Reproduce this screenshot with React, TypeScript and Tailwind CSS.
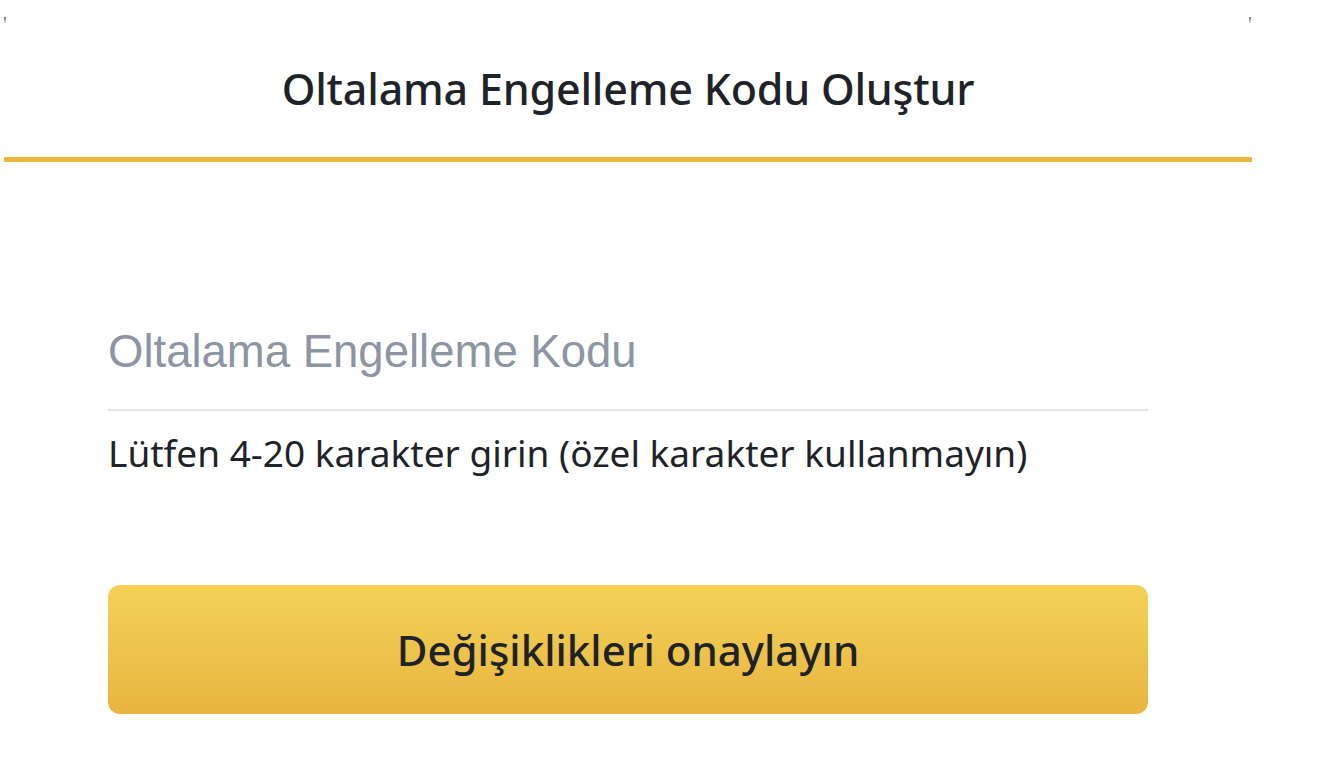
export default function App() {
  return (
    <div className="w-[1338px] h-[782px] bg-white relative" style={{ fontFamily: '"Noto Sans", "Open Sans", sans-serif' }}>
      {/* tiny corner marks */}
      <div className="absolute left-[4px] top-[17px] w-[2px] h-[6px] bg-gradient-to-b from-gray-500 to-gray-200" />
      <div className="absolute left-[1249px] top-[17px] w-[2px] h-[6px] bg-gradient-to-b from-gray-500 to-gray-200" />

      <div className="ml-[4px] w-[1248px]">
        <div className="h-[162px] border-b-[5px] border-[#e9b83c] flex items-center justify-center pt-[22px]">
          <h1 className="text-[43px] font-medium text-[#1e2329] tracking-[-0.2px]">
            Oltalama Engelleme Kodu Oluştur
          </h1>
        </div>

        <div className="px-[104px] pt-[160px]">
          <div className="border-b-2 border-[#e3e5e8] h-[89px] flex items-start">
            <input
              className="w-full outline-none bg-transparent text-[45.5px] leading-[60px] text-[#1e2329] placeholder:text-[#8c95a3]"
              style={{ fontFamily: '"Liberation Sans", Arial, sans-serif' }}
              placeholder="Oltalama Engelleme Kodu"
            />
          </div>
          <p className="mt-[20px] text-[37px] leading-[44px] text-[#1e2329]">
            Lütfen 4-20 karakter girin (özel karakter kullanmayın)
          </p>

          <button className="mt-[110px] w-full h-[129px] rounded-[12px] bg-gradient-to-b from-[#f3d257] to-[#e8b53f] flex items-center justify-center text-[42px] font-medium text-[#1e2329]">
            Değişiklikleri onaylayın
          </button>
        </div>
      </div>
    </div>
  );
}
